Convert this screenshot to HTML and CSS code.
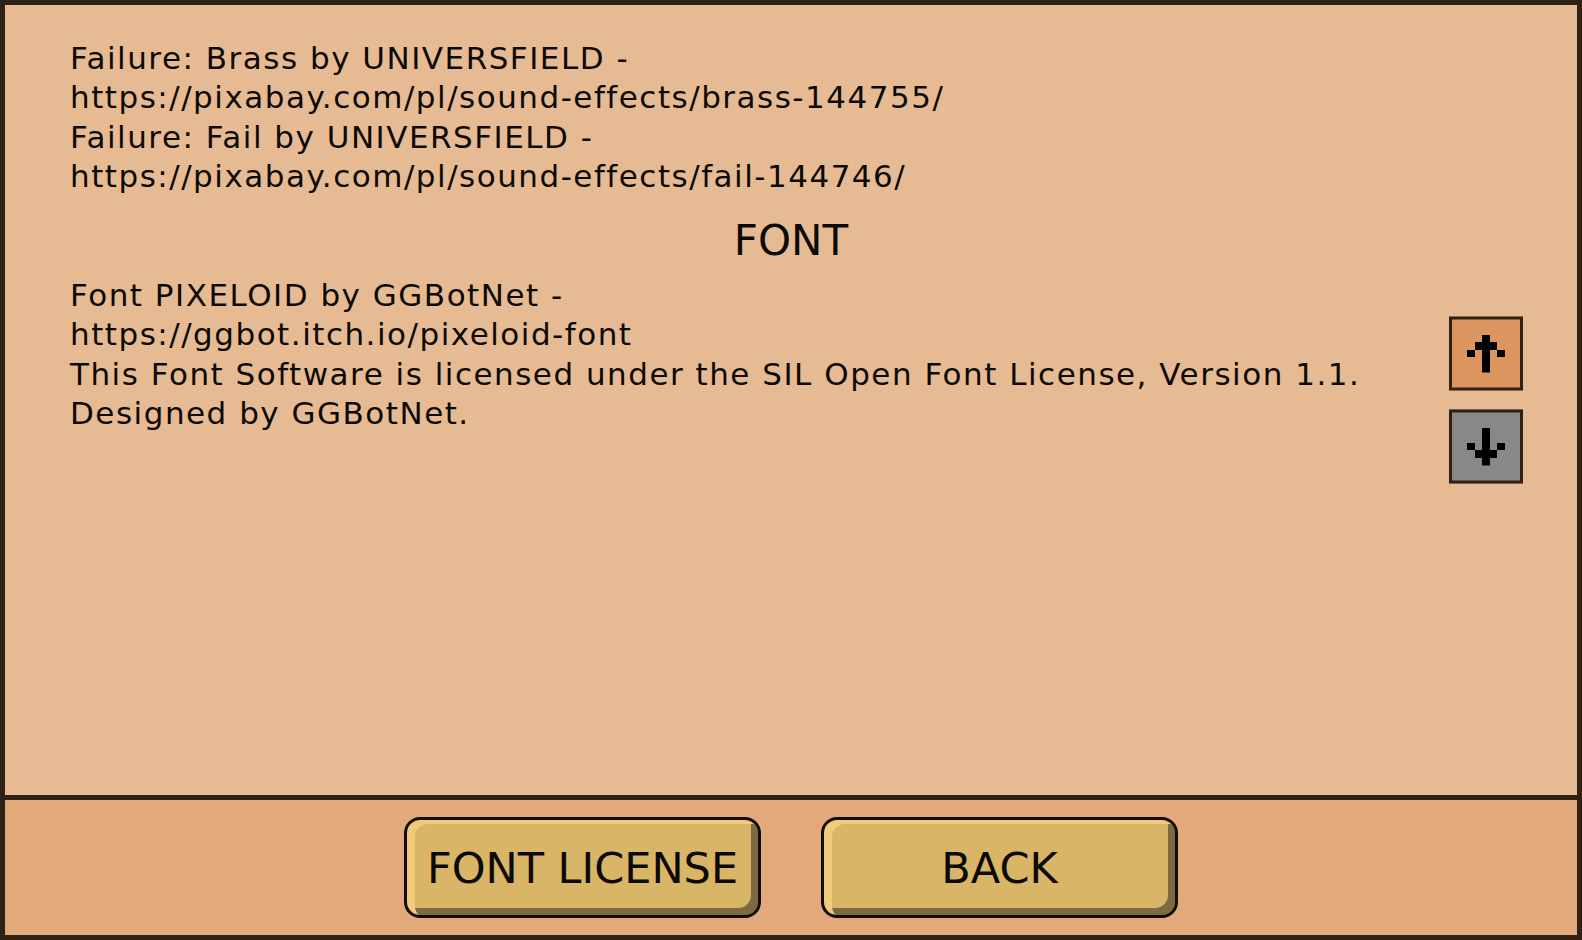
FILE: index.html
```html
<!DOCTYPE html>
<html lang="en">
<head>
  <meta charset="UTF-8" />
  <meta name="viewport" content="width=device-width, initial-scale=1.0"/>
  <title>Credits</title>
  <link rel="stylesheet" href="styles.css">
</head>
<body>

  <div class="frame">
    <div class="credits">
      <div class="credits-text">
        <p>Failure: Brass by UNIVERSFIELD -</p>
        <p>https://pixabay.com/pl/sound-effects/brass-144755/</p>
        <p>Failure: Fail by UNIVERSFIELD -</p>
        <p>https://pixabay.com/pl/sound-effects/fail-144746/</p>

        <h2>FONT</h2>

        <p>Font PIXELOID by GGBotNet -</p>
        <p>https://ggbot.itch.io/pixeloid-font</p>
        <p>This Font Software is licensed under the SIL Open Font License, Version 1.1.</p>
        <p>Designed by GGBotNet.</p>
      </div>

      <!-- scroll controls sit over the text panel -->
      <div class="scroll">
        <button class="scroll-btn scroll-up" aria-label="Scroll up">
          <svg viewBox="0 0 5 5" shape-rendering="crispEdges">
            <rect x="2" y="0" width="1" height="5"/>
            <rect x="1" y="1" width="3" height="1"/>
            <rect x="0" y="2" width="1" height="1"/>
            <rect x="4" y="2" width="1" height="1"/>
          </svg>
        </button>
        <button class="scroll-btn scroll-down" aria-label="Scroll down">
          <svg viewBox="0 0 5 5" shape-rendering="crispEdges">
            <rect x="2" y="0" width="1" height="5"/>
            <rect x="1" y="3" width="3" height="1"/>
            <rect x="0" y="2" width="1" height="1"/>
            <rect x="4" y="2" width="1" height="1"/>
          </svg>
        </button>
      </div>
    </div>

    <div class="actions">
      <button class="btn">FONT LICENSE</button>
      <button class="btn">BACK</button>
    </div>
  </div>

</body>
</html>
```

FILE: styles.css
```css
* {
  box-sizing: border-box;
}
html, body {
  margin: 0;
  height: 100%;
}
body {
  font-family: "DejaVu Sans", "Liberation Sans", sans-serif;
  color: #0d0a06;
  background: #2f2215;
}
.frame {
  height: 100vh;
  border: 5px solid #2f2215;
  display: flex;
  flex-direction: column;
}
.credits {
  position: relative;
  flex: 1;
  background: #e6bb93;
}
.credits-text {
  padding: 34px 65px 0 65px;
  font-size: 31px;
  line-height: 39.3px;
  letter-spacing: 1.5px;
}
.credits-text p {
  margin: 0;
  white-space: nowrap;
}
.credits-text h2 {
  margin: 20px 0 10px;
  text-align: center;
  font-size: 42px;
  font-weight: normal;
  line-height: 50px;
  letter-spacing: 0;
}
.scroll {
  position: absolute;
  right: 54px;
  top: 50%;
  transform: translateY(-50%);
  display: flex;
  flex-direction: column;
  gap: 19px;
}
.scroll-btn {
  width: 74px;
  height: 74px;
  border: 3px solid #2f2215;
  padding: 0;
  display: flex;
  align-items: center;
  justify-content: center;
  cursor: pointer;
}
.scroll-btn svg {
  width: 38px;
  height: 38px;
  fill: #000;
}
.scroll-up {
  background: #dc955f;
}
.scroll-down {
  background: #888888;
}
.actions {
  height: 140px;
  border-top: 5px solid #2f2215;
  background: #e2aa7a;
  display: flex;
  justify-content: center;
  align-items: center;
  gap: 60px;
}
.btn {
  width: 357px;
  height: 101px;
  border: 3px solid #120c05;
  border-radius: 16px;
  background: #d8b567;
  box-shadow: inset 8px 4px 0 #f0cb7b, inset -7px -7px 0 #7d6a44;
  font-family: "DejaVu Sans", "Liberation Sans", sans-serif;
  font-size: 43px;
  color: #0d0a06;
  cursor: pointer;
}
```
